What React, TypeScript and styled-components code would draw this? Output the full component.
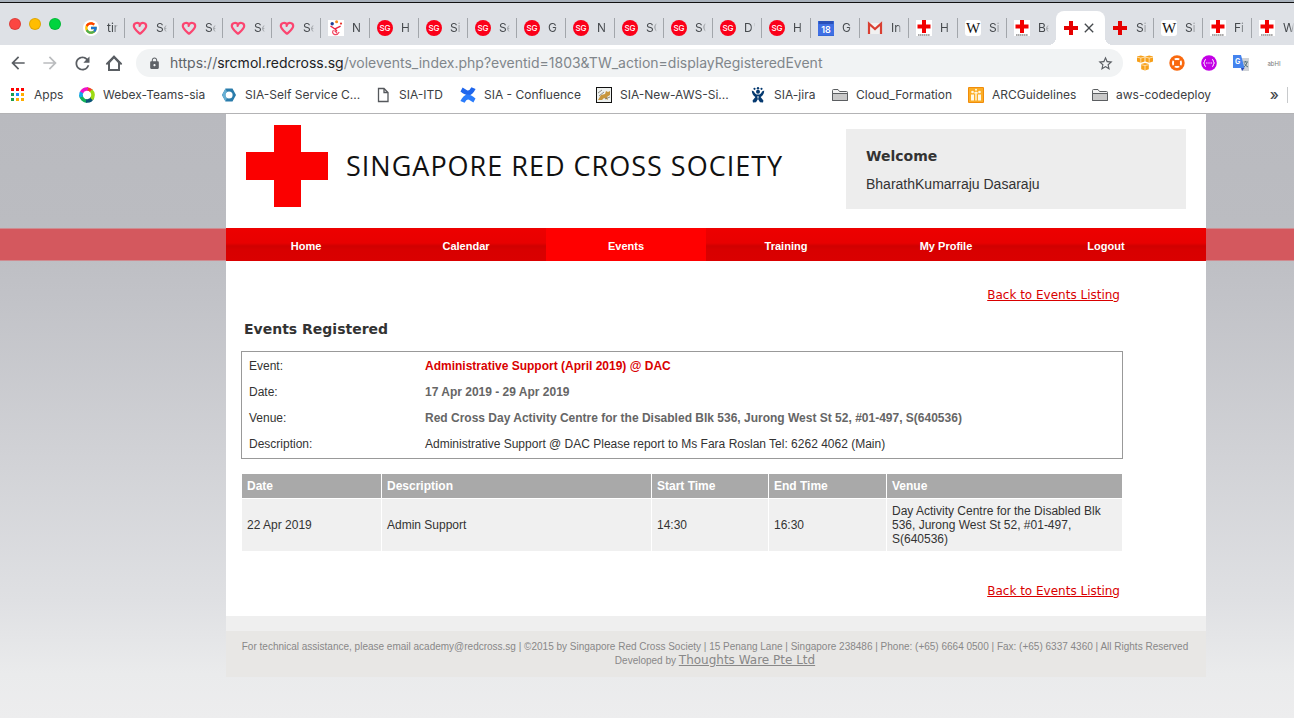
import React from "react";
import styled, { createGlobalStyle, css } from "styled-components";
import { FcGoogle } from "react-icons/fc";
import { MdArrowBack, MdArrowForward, MdRefresh, MdLock, MdStarBorder, MdClose } from "react-icons/md";

const GlobalStyle = createGlobalStyle`
  *, *::before, *::after { box-sizing: border-box; }
  body { margin: 0; font-family: "Liberation Sans", Arial, sans-serif; font-size: 12px; color: #333; }
  a { color: inherit; }
  svg { display: block; flex: none; }
`;

const ui = css`font-family: Inter, "Helvetica Neue", sans-serif;`;

const Window = styled.div`
  display: flex;
  flex-direction: column;
  min-height: 100vh;
  overflow: hidden;
`;

/* ---------- Browser chrome ---------- */

const TabBar = styled.header`
  display: flex;
  align-items: flex-end;
  height: 45px;
  background: #dee1e6;
  border-top: 2px solid #a9b2bc;
  box-shadow: inset 0 1px 0 #111;
  overflow: hidden;
`;

const Lights = styled.div`
  display: flex;
  flex: none;
  gap: 8px;
  width: 76px;
  padding: 0 0 15px 9px;
`;

const Light = styled.button<{ $color: string }>`
  width: 12px;
  height: 12px;
  padding: 0;
  border: 1px solid rgba(0, 0, 0, 0.12);
  border-radius: 50%;
  background: ${(p) => p.$color};
`;

const Tab = styled.button<{ $active?: boolean; $divider?: boolean }>`
  ${ui}
  position: relative;
  display: flex;
  flex: none;
  align-items: center;
  gap: 8px;
  width: 49px;
  height: 34px;
  padding: 0 0 0 7px;
  border: 0;
  border-radius: 8px 8px 0 0;
  background: ${(p) => (p.$active ? "#fff" : "transparent")};
  color: #45494d;
  font-size: 12px;
  line-height: 16px;
  text-align: left;

  ${(p) =>
    p.$divider &&
    css`
      &::after {
        content: "";
        position: absolute;
        right: 0;
        top: 7px;
        width: 1px;
        height: 20px;
        background: #a2a6ab;
      }
    `}

  ${(p) =>
    p.$active &&
    css`
      gap: 2px;
      &::before,
      &::after {
        content: "";
        position: absolute;
        bottom: 0;
        width: 8px;
        height: 8px;
      }
      &::before {
        left: -8px;
        background: radial-gradient(circle at 0 0, transparent 8px, #fff 8px);
      }
      &::after {
        right: -8px;
        background: radial-gradient(circle at 100% 0, transparent 8px, #fff 8px);
      }
    `}
`;

const TabLabel = styled.span`
  width: 11px;
  overflow: hidden;
  white-space: nowrap;
  mask-image: linear-gradient(90deg, #000 60%, transparent);
`;

const Toolbar = styled.div`
  display: flex;
  align-items: center;
  height: 36px;
  padding: 0 13px 0 8px;
  background: #fff;
`;

const ToolButton = styled.button<{ $muted?: boolean }>`
  display: flex;
  flex: none;
  align-items: center;
  justify-content: center;
  width: 20px;
  height: 20px;
  margin-right: 12px;
  padding: 0;
  border: 0;
  background: transparent;
  color: ${(p) => (p.$muted ? "#babcbe" : "#5a5e63")};
`;

const AddressBar = styled.div`
  display: flex;
  flex: 1;
  align-items: center;
  gap: 9px;
  min-width: 0;
  height: 28px;
  margin-right: 14px;
  padding: 0 10px 0 12px;
  border-radius: 14px;
  background: #f1f3f4;
  color: #5f6368;
`;

const Url = styled.div`
  ${ui}
  flex: 1;
  min-width: 0;
  overflow: hidden;
  color: #80868b;
  font-size: 14px;
  line-height: 20px;
  white-space: nowrap;
  outline: none;
`;

const Scheme = styled.span`color: #5f6368;`;
const Host = styled.span`color: #202124;`;

const StarButton = styled(ToolButton)`margin-right: 0; width: 16px;`;

const Extensions = styled.div`
  display: flex;
  gap: 16px;
`;

const ExtensionButton = styled(ToolButton)`
  width: 16px;
  margin-right: 0;
`;

const BookmarkBar = styled.nav`
  ${ui}
  display: flex;
  align-items: center;
  height: 33px;
  padding: 0 6px 4px 10px;
  border-bottom: 1px solid #b3b3b5;
  background: #fff;
  color: #3c4043;
  font-size: 12px;
  line-height: 16px;
`;

const Bookmark = styled.a<{ $width: number }>`
  display: flex;
  flex: none;
  align-items: center;
  gap: 8px;
  width: ${(p) => p.$width}px;
  text-decoration: none;
  white-space: nowrap;
`;

const Overflow = styled.button`
  ${ui}
  margin-left: auto;
  padding: 0 8px 0 0;
  border: 0;
  border-right: 1px solid #c8cacc;
  background: transparent;
  color: #45494d;
  font-size: 15px;
  font-weight: 500;
  line-height: 16px;
`;

/* ---------- Site ---------- */

const Site = styled.div`
  flex: 1;
  background: linear-gradient(#b9babf 0, #bbbcc1 110px, #c2c3c8 190px, #dfe0e3 486px, #eaebec 560px, #ededee 604px);
`;

const Column = styled.div`
  margin: 0 88px 0 226px;
`;

const Masthead = styled(Column)`
  display: flex;
  align-items: flex-start;
  justify-content: space-between;
  height: 114px;
  padding: 11px 20px 0;
  background: #fff;
`;

const Brand = styled.a`
  display: flex;
  align-items: center;
  gap: 18px;
  color: #111;
  font-family: "Open Sans", "Noto Sans", sans-serif;
  font-size: 27px;
  line-height: 32px;
  letter-spacing: 1px;
  text-decoration: none;
  white-space: nowrap;
`;

const Welcome = styled.section`
  width: 340px;
  height: 80px;
  margin-top: 4px;
  padding: 17px 20px 0;
  background: #ededed;
`;

const Heading = styled.h2`
  margin: 0;
  color: #333;
  font-family: Verdana, "DejaVu Sans", sans-serif;
  font-size: 14px;
  line-height: 20px;
`;

const UserName = styled.p`
  margin: 8px 0 0;
  color: #333;
  font-size: 14px;
  line-height: 20px;
`;

const NavBand = styled.div`
  background: #d4585e;
  box-shadow: inset 0 1px 0 #cf8b90, inset 0 -1px 0 #cf8b90;
`;

const Nav = styled.nav`
  display: flex;
  margin: 0 88px 0 226px;
  padding-right: 20px;
  background: linear-gradient(#ed0000 0, #e80000 15px, #d00000 18px, #d80000 22px, #da0000 100%);
`;

const NavLink = styled.a<{ $current?: boolean }>`
  flex: 1;
  padding: 10px 0 7px;
  background: ${(p) => (p.$current ? "#ff0000" : "transparent")};
  color: #fff;
  font-size: 11px;
  font-weight: bold;
  line-height: 16px;
  text-align: center;
  text-decoration: none;
`;

const Main = styled(Column)`
  padding: 27px 83px 18px 15px;
  background: #fff;
`;

const BackRow = styled.div`
  display: flex;
  justify-content: flex-end;
  padding-right: 3px;
  color: #d90000;
  font-family: Verdana, "DejaVu Sans", sans-serif;
  font-size: 12px;
  line-height: 14px;
`;

const PageTitle = styled(Heading)`
  margin: 17px 0 12px;
  padding-left: 3px;
`;

const Details = styled.table`
  width: 100%;
  border: 1px solid #999;
  border-spacing: 2px;
  font-size: 12px;
  line-height: 14px;
`;

const DetailLabel = styled.th`
  width: 174px;
  height: 24px;
  padding: 5px;
  font-weight: normal;
  text-align: left;
`;

const DetailValue = styled.td<{ $tone?: "accent" | "strong" }>`
  padding: 5px;
  color: ${(p) => (p.$tone === "accent" ? "#d90000" : p.$tone ? "#666" : "#333")};
  font-weight: ${(p) => (p.$tone ? "bold" : "normal")};
`;

const Schedule = styled.table`
  width: 100%;
  margin: 14px 0 32px;
  border-spacing: 1px;
  table-layout: fixed;
  font-size: 12px;
  line-height: 14px;
  text-align: left;
`;

const ScheduleHead = styled.th<{ $width?: number }>`
  width: ${(p) => (p.$width ? `${p.$width}px` : "auto")};
  padding: 5px;
  background: #a9a9a9;
  color: #fff;
`;

const ScheduleCell = styled.td`
  padding: 5px;
  background: #f0f0f0;
`;

const Footer = styled.footer`
  margin: 0 88px 0 226px;
  padding: 9px 12px 9px 10px;
  border-top: 15px solid #efefef;
  background: #e8e7e5;
  color: #888;
  font-size: 10px;
  line-height: 14px;
  text-align: center;
`;

const FooterLine = styled.p`
  margin: 0;
  height: 14px;
  white-space: nowrap;
`;

const Vendor = styled.a`
  font-family: Verdana, "DejaVu Sans", sans-serif;
  font-size: 12px;
  line-height: 12px;
`;

/* ---------- Icons ---------- */

const HeartIcon = () => (
  <svg width="16" height="16" viewBox="0 0 16 16" fill="none" stroke="#fb4570" strokeWidth="2.2" strokeLinejoin="round" strokeLinecap="round">
    <path d="M8 4.600 C9.600 1.800 14.200 2.600 14.200 6 C14.200 8.800 10.600 11.400 8 13.800 C5.400 11.400 1.800 8.800 1.800 6 C1.800 2.600 6.400 1.800 8 4.600 L7.600 6" />
  </svg>
);

const GoogleIcon = () => (
  <svg width="16" height="16" viewBox="0 0 16 16">
    <circle cx="8" cy="8" r="8" fill="#fff" />
    <FcGoogle x="1" y="1" size={14} />
  </svg>
);

const SgIcon = () => (
  <svg width="16" height="16" viewBox="0 0 16 16">
    <circle cx="8" cy="8" r="8" fill="#fb0019" />
    <text x="8" y="10.800" textAnchor="middle" fill="#fff" fontFamily="Inter, sans-serif" fontWeight="500" fontSize="8">SG</text>
  </svg>
);

const DancerIcon = () => (
  <svg width="16" height="16" viewBox="0 0 16 16">
    <rect width="16" height="16" fill="#fff" />
    <circle cx="8.600" cy="1.800" r="1.500" fill="#f58a1f" />
    <circle cx="4.200" cy="3.800" r="1.700" fill="#1d3f94" />
    <circle cx="13" cy="3.600" r="1.100" fill="#e8352e" />
    <path d="M2.500 6 L7 9 L12.600 6.200 M7 8.800 L9 11.400" fill="none" stroke="#ea2546" strokeWidth="1.500" />
    <path d="M5.500 10C2.400 14 8.500 17 11.200 12M6.500 10.500L9 13" fill="none" stroke="#f0455f" strokeWidth="1.200" />
  </svg>
);

const CalendarIcon = () => (
  <svg width="16" height="16" viewBox="0 0 16 16">
    <path d="M0 1h16v15H0z" fill="#3367d6" />
    <path d="M1 1h14v3H1z" fill="#2a50b8" />
    <path d="M0 4h16v11H0z" fill="#3f6fe4" />
    <text x="8" y="13" textAnchor="middle" fill="#fff" fontFamily="Inter, sans-serif" fontWeight="600" fontSize="9">18</text>
  </svg>
);

const GmailIcon = () => (
  <svg width="16" height="16" viewBox="0 0 16 16">
    <path d="M1.500 3h13v11h-13z" fill="#f1f1f1" />
    <path d="M2 14V3.600L8 9l6-5.400V14" fill="none" stroke="#d93f32" strokeWidth="2.200" />
  </svg>
);

const WikiIcon = () => (
  <svg width="16" height="16" viewBox="0 0 16 16">
    <rect width="16" height="16" rx="3" fill="#fff" />
    <text x="8" y="13" textAnchor="middle" fill="#111" fontFamily="Liberation Serif, serif" fontSize="15">W</text>
  </svg>
);

const CrossIcon = () => (
  <svg width="16" height="16" viewBox="0 0 16 16">
    <rect width="16" height="16" fill="#fff" />
    <path d="M6 0h4v4.500h4.500v4H10V13H6V8.500H1.500v-4H6z" fill="#f20000" />
    <path d="M2 15h12" stroke="#555" strokeWidth="1" strokeDasharray="1.500 0.400" />
  </svg>
);

const PlainCrossIcon = () => (
  <svg width="16" height="16" viewBox="0 0 16 16">
    <path d="M6 1h4v5h5v4h-5v5H6v-5H1V6h5z" fill="#e60000" />
  </svg>
);

const HomeIcon = () => (
  <svg width="18" height="18" viewBox="0 0 18 18" fill="none" stroke="currentColor" strokeWidth="2">
    <path d="M3 9.600 L9 3 L15 9.600 H14 V16 H4 V9.600 Z" />
    <path d="M1.400 10 L9 2.400 L16.600 10" strokeWidth="1.600" />
  </svg>
);

const AppsIcon = () => (
  <svg width="16" height="16" viewBox="0 0 16 16">
    {["#f00", "#f00", "#f00", "#1a9e50", "#1a8cff", "#ffad00", "#1a9e50", "#ffad00", "#ffad00"].map((color, i) => (
      <rect key={i} x={1 + (i % 3) * 5} y={1 + Math.floor(i / 3) * 5} width="3" height="3" fill={color} />
    ))}
  </svg>
);

const WebexIcon = () => (
  <svg width="16" height="16" viewBox="0 0 16 16" fill="none" strokeWidth="3.600">
    <path d="M2 8A6 6 0 0 0 8 14" stroke="#12b35a" />
    <path d="M7 13.900A6 6 0 0 0 13.500 10.500" stroke="#0b5577" />
    <path d="M8 2A6 6 0 0 1 12.500 4" stroke="#f4402c" />
    <path d="M12 3.500A6 6 0 0 1 12.500 12" stroke="#9edb12" />
    <path d="M2.300 6A6 6 0 0 1 9 2.100" stroke="#ef12c8" />
    <path d="M2.300 10A6 6 0 0 1 2.600 5.400" stroke="#12a6ee" />
  </svg>
);

const HexIcon = () => (
  <svg width="16" height="16" viewBox="0 0 16 16">
    <path fillRule="evenodd" d="M4.500 1.500H11.500L15 8L11.500 14.500H4.500L1 8ZM8 4.400A3.600 3.600 0 1 0 8 11.600A3.600 3.600 0 1 0 8 4.400Z" fill="#2a7cab" />
    <path d="M4.500 1.500L1 8L4.500 14.500L6 11A3.600 3.600 0 0 1 6 5Z" fill="#68afd3" />
  </svg>
);

const PageIcon = () => (
  <svg width="16" height="16" viewBox="0 0 16 16" fill="none" stroke="#55585c" strokeWidth="1.300">
    <path d="M3.500 1.500h5.500l4 4v9h-9.500zM9 1.500v4h4" />
  </svg>
);

const ConfluenceIcon = () => (
  <svg width="16" height="16" viewBox="0 0 16 16">
    <path d="M2.600 .5 L.5 4.600 Q5 8.400 8.400 8.400 Q12.500 8.200 15.600 2 L11.400 .3 Q9.200 4.400 7 3.200 Z" fill="#1f66ec" />
    <path d="M13.400 15.500 L15.500 11.400 Q11 7.600 7.600 7.600 Q3.500 7.800 .4 14 L4.600 15.700 Q6.800 11.600 9 12.800 Z" fill="#2a7cfb" />
  </svg>
);

const CatIcon = () => (
  <svg width="16" height="16" viewBox="0 0 16 16">
    <rect x=".5" y=".5" width="15" height="15" fill="#eef1ef" stroke="#111" />
    <path d="M2 13L5 8L9 7L10 4L12 5L14 4L14 8L11 10L12 13L8 11L6 13Z" fill="#c8963c" />
    <path d="M2 6L6 3M3 9L8 5M9 12L14 10" stroke="#76756b" strokeWidth=".8" />
  </svg>
);

const JiraIcon = () => (
  <svg width="16" height="16" viewBox="0 0 16 16" fill="#063a70">
    <circle cx="4.500" cy="1.800" r="1.100" />
    <circle cx="8" cy="1.200" r="1.200" />
    <circle cx="11.500" cy="1.800" r="1.100" />
    <circle cx="8" cy="4.800" r="2" />
    <path d="M1.800 3.500L4 4.500C4.600 6.600 6 7.600 8 7.600C10 7.600 11.400 6.600 12 4.500L14.200 3.500C14.200 7 12.600 8.800 10.600 10L13.400 13.500L13 15.600L10 15.200L8 12L6 15.200L3 15.600L2.600 13.500L5.400 10C3.400 8.800 1.800 7 1.800 3.500Z" />
    <path d="M8 9V11.500" stroke="#fff" />
  </svg>
);

const FolderIcon = () => (
  <svg width="16" height="16" viewBox="0 0 16 16" stroke="#5b5e61">
    <path d="M.5 13.500V3.500Q.5 2.500 1.500 2.500H6L7.500 4.500H14.500Q15.500 4.500 15.500 5.500V13.500Z" fill="#f2f2f2" />
    <path d="M.5 6.500H15.500V13.500H.5Z" fill="#c9c9c9" />
  </svg>
);

const ArcIcon = () => (
  <svg width="16" height="16" viewBox="0 0 16 16">
    <rect width="16" height="16" rx="1" fill="#f08c0a" />
    <rect x="1" y="1" width="14" height="14" fill="#fbad26" />
    <g fill="#fff8e6">
      <circle cx="4.500" cy="5" r="1.300" />
      <circle cx="11.500" cy="5" r="1.300" />
      <circle cx="8" cy="2.800" r="1" />
      <path d="M3 7.500h3v6H3zM10 7.500h3v6h-3zM7.300 7h1.400v6.500H7.300zM5.500 6L8 4.400L10.500 6L8 7z" />
    </g>
  </svg>
);

const CubesIcon = () => (
  <svg width="16" height="16" viewBox="0 0 16 16">
    <path d="M0 1.500L3.800 .5L7.600 1.500V6.500L3.800 7.800L0 6.500zM8.400 1.500L12.200 .5L16 1.500V6.500L12.200 7.800L8.400 6.500zM4.200 9L8 8L11.800 9V14.200L8 15.500L4.200 14.200z" fill="#f7a01a" />
    <path d="M0 2.200L3.800 3L7.600 2.200M3.800 3V7.800M8.400 2.200L12.200 3L16 2.200M12.200 3V7.800M4.200 9.700L8 10.500L11.800 9.700M8 10.500V15.500" fill="none" stroke="#fff3dd" strokeWidth=".7" />
  </svg>
);

const BuoyIcon = () => (
  <svg width="16" height="16" viewBox="0 0 16 16" fill="none">
    <circle cx="8" cy="8" r="7.700" fill="#f9690e" />
    <circle cx="8" cy="8" r="4" stroke="#fff" strokeWidth="2" />
    <path d="M3.800 3.800l2.800 2.800M12.200 3.800l-2.800 2.800M3.800 12.200l2.800-2.800M12.200 12.200l-2.800-2.800" stroke="#f9690e" strokeWidth="1.800" />
    <circle cx="8" cy="8" r="2.600" fill="#f9690e" />
  </svg>
);

const BracesIcon = () => (
  <svg width="16" height="16" viewBox="0 0 16 16" fill="none">
    <circle cx="8" cy="8" r="7.800" fill="#c400e6" />
    <path d="M5 4.500Q3.600 4.500 3.600 6.200Q3.600 8 2.400 8Q3.600 8 3.600 9.800Q3.600 11.500 5 11.500M11 4.500Q12.400 4.500 12.400 6.200Q12.400 8 13.600 8Q12.400 8 12.400 9.800Q12.400 11.500 11 11.500M5 8h1.500M7.300 8h1.400M9.500 8H11" stroke="#fff" strokeWidth=".9" />
  </svg>
);

const TranslateIcon = () => (
  <svg width="16" height="16" viewBox="0 0 16 16">
    <path d="M6 3h10v13H9z" fill="#cfd2d6" />
    <path d="M0 0h8l3.500 13H0z" fill="#4483ee" />
    <path d="M8 13h3.500L9 16z" fill="#2847b8" />
    <text x="2" y="9" fill="#fff" fontFamily="Inter, sans-serif" fontWeight="700" fontSize="7">G</text>
    <path d="M10.500 7H15M12.500 6v1M14 7.500Q13 11 10.800 12M11.500 8.500Q12.500 11 15 12" fill="none" stroke="#53717c" />
  </svg>
);

const AbineIcon = () => (
  <svg width="16" height="16" viewBox="0 0 16 16">
    <text x="9" y="11" textAnchor="middle" fill="#777" fontFamily="Inter, sans-serif" fontSize="6">abHI</text>
  </svg>
);

const LogoCross = () => (
  <svg width="82" height="82" viewBox="0 0 82 82" role="img" aria-label="Red cross">
    <path d="M28 0h27v27h27v28H55v27H28V55H0V27h28z" fill="#fb0000" />
  </svg>
);

/* ---------- Data ---------- */

type TabInfo = { icon: React.ReactNode; label: string; active?: boolean };

const tabs: TabInfo[] = [
  { icon: <GoogleIcon />, label: "tin" },
  ...[1, 2, 3, 4].map(() => ({ icon: <HeartIcon />, label: "Se" })),
  { icon: <DancerIcon />, label: "N" },
  ...["H", "Si", "Se", "G", "N", "SG", "SG", "D'", "H"].map((label) => ({ icon: <SgIcon />, label })),
  { icon: <CalendarIcon />, label: "G" },
  { icon: <GmailIcon />, label: "In" },
  { icon: <CrossIcon />, label: "H" },
  { icon: <WikiIcon />, label: "Si" },
  { icon: <CrossIcon />, label: "Be" },
  { icon: <PlainCrossIcon />, label: "Events", active: true },
  { icon: <PlainCrossIcon />, label: "Si" },
  { icon: <WikiIcon />, label: "Si" },
  { icon: <CrossIcon />, label: "Fi" },
  { icon: <CrossIcon />, label: "W" },
];

const bookmarks = [
  { icon: <AppsIcon />, label: "Apps", width: 69 },
  { icon: <WebexIcon />, label: "Webex-Teams-sia", width: 142 },
  { icon: <HexIcon />, label: "SIA-Self Service C...", width: 154 },
  { icon: <PageIcon />, label: "SIA-ITD", width: 85 },
  { icon: <ConfluenceIcon />, label: "SIA - Confluence", width: 136 },
  { icon: <CatIcon />, label: "SIA-New-AWS-Si...", width: 154 },
  { icon: <JiraIcon />, label: "SIA-jira", width: 82 },
  { icon: <FolderIcon />, label: "Cloud_Formation", width: 136 },
  { icon: <ArcIcon />, label: "ARCGuidelines", width: 124 },
  { icon: <FolderIcon />, label: "aws-codedeploy", width: 124 },
];

const navItems = ["Home", "Calendar", "Events", "Training", "My Profile", "Logout"];

const extensions = [
  { name: "Cubes", icon: <CubesIcon /> },
  { name: "Support", icon: <BuoyIcon /> },
  { name: "Braces", icon: <BracesIcon /> },
  { name: "Translate", icon: <TranslateIcon /> },
  { name: "Privacy", icon: <AbineIcon /> },
];

const BackLink = () => (
  <BackRow>
    <a href="#events">Back to Events Listing</a>
  </BackRow>
);

export default function App() {
  return (
    <Window>
      <GlobalStyle />
      <TabBar>
        <Lights>
          <Light $color="#fb4642" aria-label="Close" />
          <Light $color="#ffbd00" aria-label="Minimise" />
          <Light $color="#00d43e" aria-label="Zoom" />
        </Lights>
        {tabs.map((tab, i) => (
          <Tab key={i} $active={tab.active} $divider={!tab.active && !tabs[i + 1]?.active && i < tabs.length - 1} aria-label={tab.label}>
            {tab.icon}
            {tab.active ? <MdClose size={16} /> : <TabLabel>{tab.label}</TabLabel>}
          </Tab>
        ))}
      </TabBar>

      <Toolbar>
        <ToolButton aria-label="Back"><MdArrowBack size={20} /></ToolButton>
        <ToolButton $muted aria-label="Forward"><MdArrowForward size={20} /></ToolButton>
        <ToolButton aria-label="Reload"><MdRefresh size={21} /></ToolButton>
        <ToolButton aria-label="Home"><HomeIcon /></ToolButton>
        <AddressBar>
          <MdLock size={13} />
          <Url role="textbox" aria-label="Address" contentEditable suppressContentEditableWarning spellCheck={false}>
            <Scheme>https://</Scheme>
            <Host>srcmol.redcross.sg</Host>
            /volevents_index.php?eventid=1803&amp;TW_action=displayRegisteredEvent
          </Url>
          <StarButton aria-label="Bookmark this page"><MdStarBorder size={17} /></StarButton>
        </AddressBar>
        <Extensions>
          {extensions.map((item) => (
            <ExtensionButton key={item.name} aria-label={item.name}>{item.icon}</ExtensionButton>
          ))}
        </Extensions>
      </Toolbar>

      <BookmarkBar aria-label="Bookmarks">
        {bookmarks.map((item) => (
          <Bookmark key={item.label} href="#bookmark" $width={item.width}>
            {item.icon}
            {item.label}
          </Bookmark>
        ))}
        <Overflow aria-label="More bookmarks">»</Overflow>
      </BookmarkBar>

      <Site>
        <Masthead>
          <Brand href="#home">
            <LogoCross />
            SINGAPORE RED CROSS SOCIETY
          </Brand>
          <Welcome>
            <Heading>Welcome</Heading>
            <UserName>BharathKumarraju Dasaraju</UserName>
          </Welcome>
        </Masthead>

        <NavBand>
          <Nav aria-label="Main">
            {navItems.map((item) => (
              <NavLink key={item} href="#nav" $current={item === "Events"}>{item}</NavLink>
            ))}
          </Nav>
        </NavBand>

        <Main as="main">
          <BackLink />
          <PageTitle as="h1">Events Registered</PageTitle>
          <Details>
            <tbody>
              <tr>
                <DetailLabel scope="row">Event:</DetailLabel>
                <DetailValue $tone="accent">Administrative Support (April 2019) @ DAC</DetailValue>
              </tr>
              <tr>
                <DetailLabel scope="row">Date:</DetailLabel>
                <DetailValue $tone="strong">17 Apr 2019 - 29 Apr 2019</DetailValue>
              </tr>
              <tr>
                <DetailLabel scope="row">Venue:</DetailLabel>
                <DetailValue $tone="strong">Red Cross Day Activity Centre for the Disabled Blk 536, Jurong West St 52, #01-497, S(640536)</DetailValue>
              </tr>
              <tr>
                <DetailLabel scope="row">Description:</DetailLabel>
                <DetailValue>Administrative Support @ DAC Please report to Ms Fara Roslan Tel: 6262 4062 (Main)</DetailValue>
              </tr>
            </tbody>
          </Details>
          <Schedule>
            <thead>
              <tr>
                <ScheduleHead $width={139}>Date</ScheduleHead>
                <ScheduleHead $width={269}>Description</ScheduleHead>
                <ScheduleHead $width={116}>Start Time</ScheduleHead>
                <ScheduleHead $width={117}>End Time</ScheduleHead>
                <ScheduleHead>Venue</ScheduleHead>
              </tr>
            </thead>
            <tbody>
              <tr>
                <ScheduleCell>22 Apr 2019</ScheduleCell>
                <ScheduleCell>Admin Support</ScheduleCell>
                <ScheduleCell>14:30</ScheduleCell>
                <ScheduleCell>16:30</ScheduleCell>
                <ScheduleCell>Day Activity Centre for the Disabled Blk 536, Jurong West St 52, #01-497, S(640536)</ScheduleCell>
              </tr>
            </tbody>
          </Schedule>
          <BackLink />
        </Main>

        <Footer>
          <FooterLine>
            For technical assistance, please email academy@redcross.sg | ©2015 by Singapore Red Cross Society | 15 Penang Lane | Singapore 238486 | Phone: (+65) 6664 0500 | Fax: (+65) 6337 4360 | All Rights Reserved
          </FooterLine>
          <FooterLine>
            Developed by <Vendor href="#vendor">Thoughts Ware Pte Ltd</Vendor>
          </FooterLine>
        </Footer>
      </Site>
    </Window>
  );
}
